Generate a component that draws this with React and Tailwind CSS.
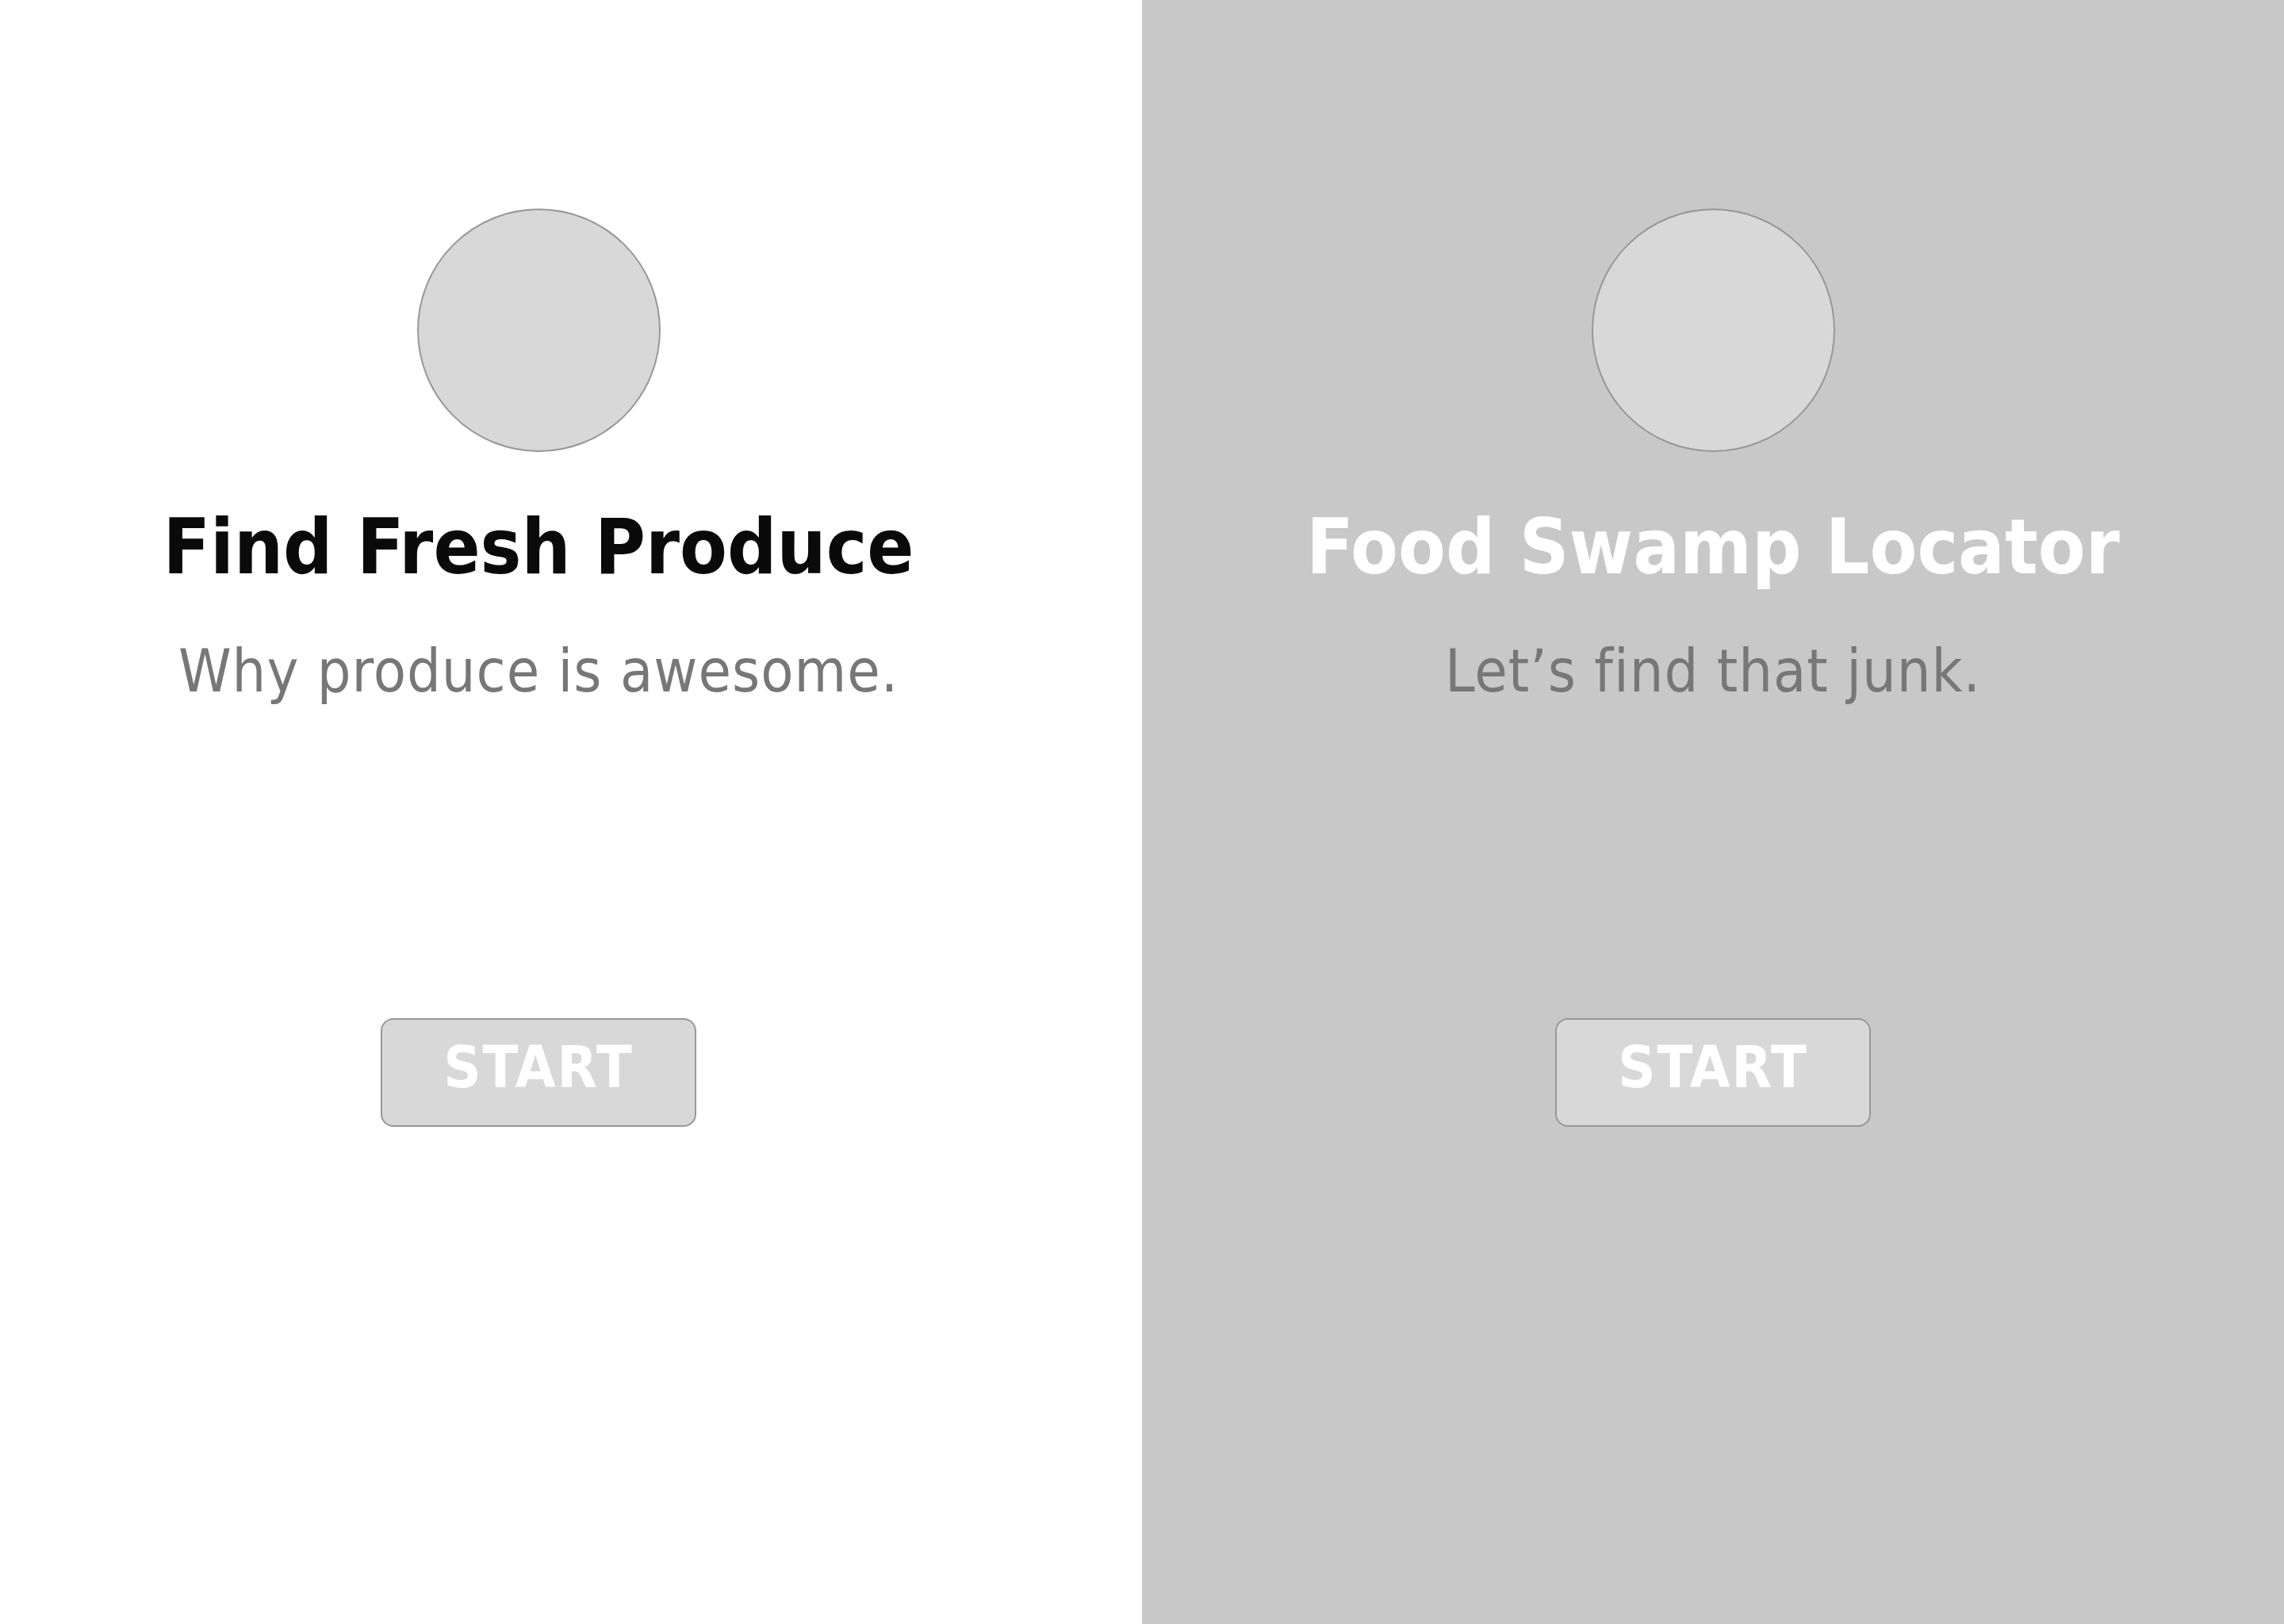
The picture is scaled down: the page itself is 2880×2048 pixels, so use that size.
import React from 'react';

const font = { fontFamily: '"DejaVu Sans Condensed", "DejaVu Sans", sans-serif' };

const Panel = ({ title, subtitle, dark, className }) => {
    return (
        <div className={`flex flex-col items-center h-screen ${className}`} style={font}>
            <div className="mt-[263px] w-[307px] h-[307px] rounded-full bg-[#d8d8d8] border-2 border-[#979797]" />
            <h1 className={`mt-[71px] text-[97px] leading-none font-bold whitespace-nowrap ${dark ? 'text-[#0a0a0a]' : 'text-white'}`}>
                {title}
            </h1>
            <p className="mt-[71px] text-[75px] leading-none tracking-[1px] text-[#777777] whitespace-nowrap">
                {subtitle}
            </p>
            <button className="mt-[400px] w-[398px] h-[137px] flex items-center justify-center pb-[14px] rounded-[16px] bg-[#d8d8d8] border-2 border-[#979797] text-white font-bold text-[73px] tracking-[2px] leading-none">
                START
            </button>
        </div>
    )
}

const App = () => {
    return (
        <div className="grid grid-cols-2 w-full h-screen">
            <Panel
                title="Find Fresh Produce"
                subtitle="Why produce is awesome."
                dark
                className="bg-white pr-[82px]"
            />
            <Panel
                title="Food Swamp Locator"
                subtitle="Let’s find that junk."
                className="bg-[#c8c8c8]"
            />
        </div>
    )
}

export default App;
